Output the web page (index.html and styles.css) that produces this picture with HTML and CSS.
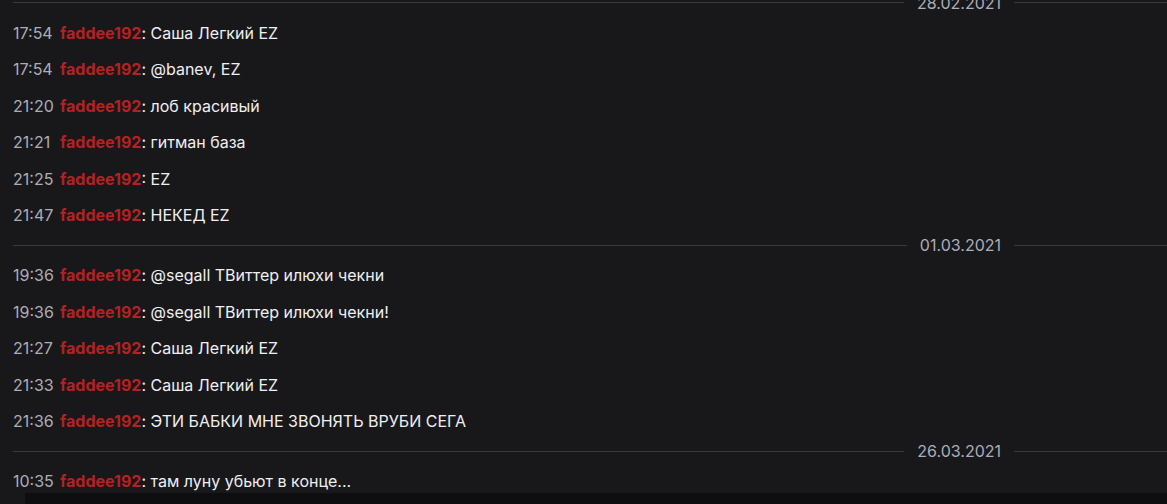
FILE: index.html
```html
<!DOCTYPE html>
<html lang="ru">
<head>
<meta charset="utf-8">
<title>Chat log</title>
<link rel="stylesheet" href="styles.css">
</head>
<body>
<div class="log">
  <div class="sep"><span class="line"></span><span class="date">28.02.2021</span><span class="line tail"></span></div>
  <div class="msg"><span class="time">17:54</span><span class="user">faddee192</span>: Саша Легкий EZ</div>
  <div class="msg"><span class="time">17:54</span><span class="user">faddee192</span>: @banev, EZ</div>
  <div class="msg"><span class="time">21:20</span><span class="user">faddee192</span>: лоб красивый</div>
  <div class="msg"><span class="time">21:21</span><span class="user">faddee192</span>: гитман база</div>
  <div class="msg"><span class="time">21:25</span><span class="user">faddee192</span>: EZ</div>
  <div class="msg"><span class="time">21:47</span><span class="user">faddee192</span>: НЕКЕД EZ</div>
  <div class="sep"><span class="line"></span><span class="date">01.03.2021</span><span class="line tail"></span></div>
  <div class="msg"><span class="time">19:36</span><span class="user">faddee192</span>: @segall ТВиттер илюхи чекни</div>
  <div class="msg"><span class="time">19:36</span><span class="user">faddee192</span>: @segall ТВиттер илюхи чекни!</div>
  <div class="msg"><span class="time">21:27</span><span class="user">faddee192</span>: Саша Легкий EZ</div>
  <div class="msg"><span class="time">21:33</span><span class="user">faddee192</span>: Саша Легкий EZ</div>
  <div class="msg"><span class="time">21:36</span><span class="user">faddee192</span>: ЭТИ БАБКИ МНЕ ЗВОНЯТЬ ВРУБИ СЕГА</div>
  <div class="sep"><span class="line"></span><span class="date">26.03.2021</span><span class="line tail"></span></div>
  <div class="msg"><span class="time">10:35</span><span class="user">faddee192</span>: там луну убьют в конце...</div>
</div>
<div class="footer-shade"></div>
</body>
</html>
```
FILE: styles.css
```css
html, body {
  margin: 0;
  padding: 0;
  background: #18181b;
  height: 100%;
  overflow: hidden;
}
body {
  font-family: Inter, "Noto Sans", sans-serif;
  font-size: 16px;
  color: #efeff1;
  position: relative;
}
.log {
  display: flex;
  flex-direction: column;
  margin-top: -9px;
  padding-left: 13px;
}
.msg {
  height: 36.5px;
  line-height: 36.5px;
  white-space: pre;
  color: #efeff1;
}
.time {
  display: inline-block;
  width: 47px;
  color: #adadb8;
}
.user {
  color: #b22222;
  font-weight: 700;
}
.sep {
  height: 23.5px;
  display: flex;
  align-items: center;
}
.line {
  flex: 1;
  height: 1px;
  background: #3a3a3d;
}
.line.tail {
  flex: 0 0 153px;
}
.date {
  color: #adadb8;
  padding: 0 13px;
}
.footer-shade {
  position: absolute;
  left: 25px;
  right: 0;
  top: 493px;
  bottom: 0;
  background: #0e0e10;
}
```
